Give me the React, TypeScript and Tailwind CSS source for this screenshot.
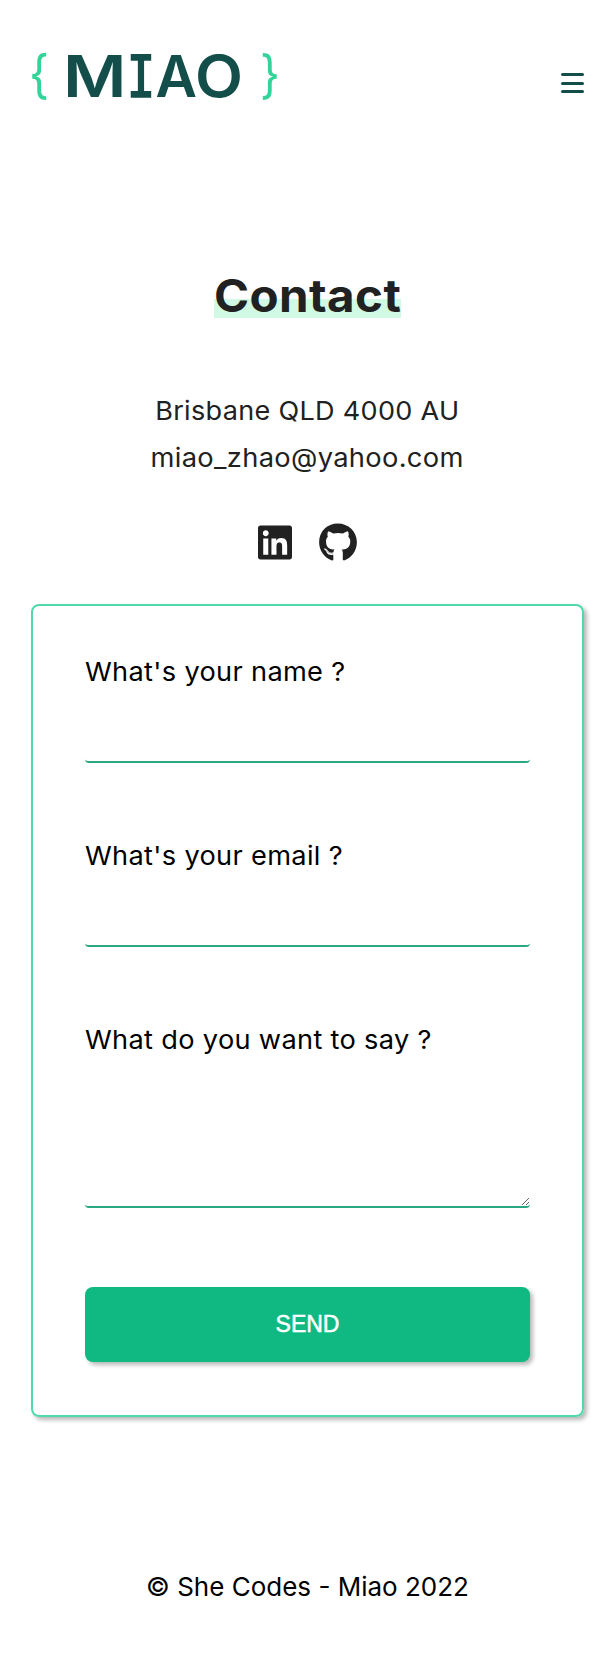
import { FaGithub, FaLinkedin } from "react-icons/fa";

function Logo() {
  return (
    <svg width="254" height="76" viewBox="-4 -10 254 76" aria-label="MIAO" className="-ml-1 -mt-2.5 block">
      <g fill="#34d399" fontFamily="Inter, sans-serif" fontSize="52" fontWeight="400">
        <text x="-2" y="45" textLength="20" lengthAdjust="spacingAndGlyphs">{"{"}</text>
        <text x="229" y="45" textLength="20" lengthAdjust="spacingAndGlyphs">{"}"}</text>
      </g>
      <g fill="#134e4a" fontFamily="Inter, sans-serif" fontSize="57.5" fontWeight="600">
        <text x="32" y="49" textLength="63.5" lengthAdjust="spacingAndGlyphs">M</text>
        <text x="96" y="49" fontFamily="DejaVu Sans Mono, monospace" fontWeight="400" stroke="#134e4a" strokeWidth="2" textLength="28" lengthAdjust="spacingAndGlyphs">I</text>
        <text x="124.5" y="49" textLength="41.5" lengthAdjust="spacingAndGlyphs">A</text>
        <text x="164" y="49" textLength="48" lengthAdjust="spacingAndGlyphs">O</text>
      </g>
    </svg>
  );
}

function Field({ label, multiline }: { label: string; multiline?: boolean }) {
  return (
    <label className="flex flex-col">
      <span className="h-10 origin-left scale-x-[1.046] whitespace-nowrap text-[26px] leading-10 tracking-[0.3px]">{label}</span>
      {multiline ? (
        <textarea className="mt-[37px] block h-[111px] w-full resize rounded border-b-2 border-[#2ba882] bg-transparent outline-none" />
      ) : (
        <input className="mt-[37px] block h-[34px] w-full rounded border-b-2 border-[#2ba882] bg-transparent outline-none" />
      )}
    </label>
  );
}

export default function App() {
  return (
    <div className="flex h-[1654px] w-[614px] flex-col bg-white pl-[31px] pr-[30px] font-['Inter',sans-serif] text-black">
      <header className="flex h-[140px] justify-between pt-12">
        <Logo />
        <button className="mt-[25px] flex h-5 w-[23px] flex-col justify-between" aria-label="Menu">
          <span className="h-[3px] w-full rounded-sm bg-[#134e4a]" />
          <span className="h-[3px] w-full rounded-sm bg-[#134e4a]" />
          <span className="h-[3px] w-full rounded-sm bg-[#134e4a]" />
        </button>
      </header>

      <main className="flex flex-col text-[#212121]">
        <h1 className="mt-[132px] flex h-[46px] justify-center text-[45px] font-bold leading-[47px]">
          <span className="w-[187px] whitespace-nowrap bg-linear-to-b from-transparent from-58% to-[#d1fae5] to-58%">
            <span className="inline-block origin-left scale-x-[1.055] tracking-[0.4px]">Contact</span>
          </span>
        </h1>
        <address className="mt-[69px] flex flex-col items-center text-[26px] leading-[47px] tracking-[0.3px] not-italic">
          <span className="scale-x-[1.04]">Brisbane QLD 4000 AU</span>
          <span className="scale-x-[1.05]">miao_zhao@yahoo.com</span>
        </address>
        <div className="mt-[42px] flex h-10 justify-center gap-[27px]">
          <FaLinkedin className="h-[39px] w-[34px]" />
          <FaGithub className="h-[39px] w-[38px]" />
        </div>

        <form className="mt-[41px] flex h-[813px] flex-col rounded-lg border-2 border-[#52d9a9] px-[52px] pt-[46px] text-black shadow-[3px_3px_4px_rgba(0,0,0,0.28)]">
          <Field label="What's your name ?" />
          <div className="mt-[73px]">
            <Field label="What's your email ?" />
          </div>
          <div className="mt-[73px]">
            <Field label="What do you want to say ?" multiline />
          </div>
          <button
            type="button"
            className="mt-[79px] h-[75px] w-full rounded-lg bg-[#10b981] font-['Liberation_Sans',Arial,sans-serif] text-[23px] text-white shadow-[3px_3px_4px_rgba(0,0,0,0.28)] [-webkit-text-stroke:0.5px_white]"
          >
            SEND
          </button>
        </form>
      </main>

      <footer className="mt-[150px] text-center text-[26px] leading-10">© She Codes - Miao 2022</footer>
    </div>
  );
}
